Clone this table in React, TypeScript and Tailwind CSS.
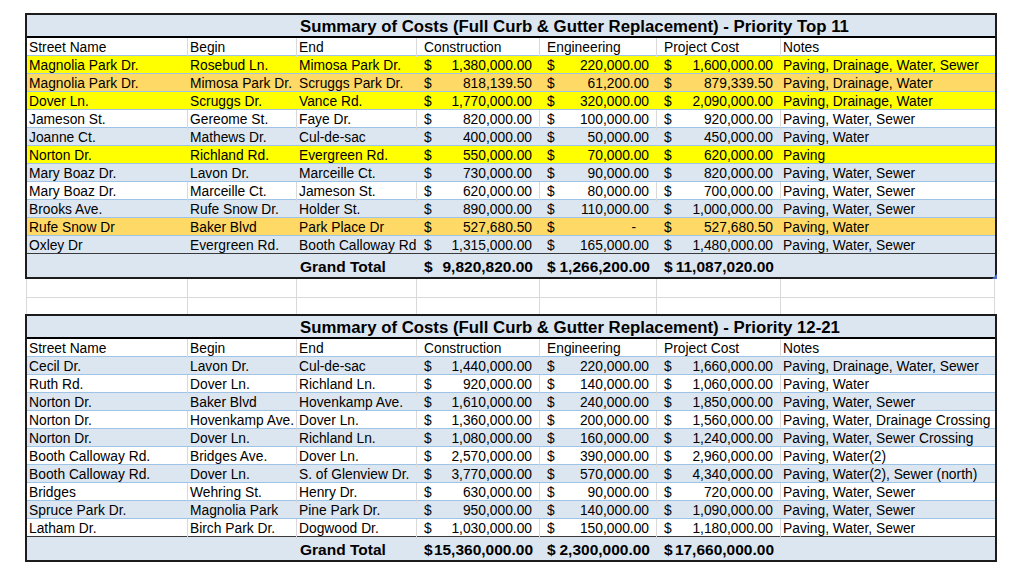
type Fill = "yellow" | "orange" | "blue" | "white";

interface CostRow {
  street: string;
  begin: string;
  end: string;
  construction: string;
  engineering: string;
  project: string;
  notes: string;
  fill: Fill;
}

interface Summary {
  title: string;
  rows: CostRow[];
  totals: [string, string, string];
}

const COLS = "grid grid-cols-[161px_109px_120px_123px_117px_124px_214px]";

const FILLS: Record<Fill, string> = {
  yellow: "bg-[#ffff00]",
  orange: "bg-[#ffd966]",
  blue: "bg-[#dce6f1]",
  white: "bg-white",
};

const top11: Summary = {
  title: "Summary of Costs (Full Curb & Gutter Replacement) - Priority Top 11",
  totals: ["9,820,820.00", "1,266,200.00", "11,087,020.00"],
  rows: [
    { street: "Magnolia Park Dr.", begin: "Rosebud Ln.", end: "Mimosa Park Dr.", construction: "1,380,000.00", engineering: "220,000.00", project: "1,600,000.00", notes: "Paving, Drainage, Water, Sewer", fill: "yellow" },
    { street: "Magnolia Park Dr.", begin: "Mimosa Park Dr.", end: "Scruggs Park Dr.", construction: "818,139.50", engineering: "61,200.00", project: "879,339.50", notes: "Paving, Drainage, Water", fill: "orange" },
    { street: "Dover Ln.", begin: "Scruggs Dr.", end: "Vance Rd.", construction: "1,770,000.00", engineering: "320,000.00", project: "2,090,000.00", notes: "Paving, Drainage, Water", fill: "yellow" },
    { street: "Jameson St.", begin: "Gereome St.", end: "Faye Dr.", construction: "820,000.00", engineering: "100,000.00", project: "920,000.00", notes: "Paving, Water, Sewer", fill: "white" },
    { street: "Joanne Ct.", begin: "Mathews Dr.", end: "Cul-de-sac", construction: "400,000.00", engineering: "50,000.00", project: "450,000.00", notes: "Paving, Water", fill: "blue" },
    { street: "Norton Dr.", begin: "Richland Rd.", end: "Evergreen Rd.", construction: "550,000.00", engineering: "70,000.00", project: "620,000.00", notes: "Paving", fill: "yellow" },
    { street: "Mary Boaz Dr.", begin: "Lavon Dr.", end: "Marceille Ct.", construction: "730,000.00", engineering: "90,000.00", project: "820,000.00", notes: "Paving, Water, Sewer", fill: "blue" },
    { street: "Mary Boaz Dr.", begin: "Marceille Ct.", end: "Jameson St.", construction: "620,000.00", engineering: "80,000.00", project: "700,000.00", notes: "Paving, Water, Sewer", fill: "white" },
    { street: "Brooks Ave.", begin: "Rufe Snow Dr.", end: "Holder St.", construction: "890,000.00", engineering: "110,000.00", project: "1,000,000.00", notes: "Paving, Water, Sewer", fill: "blue" },
    { street: "Rufe Snow Dr", begin: "Baker Blvd", end: "Park Place Dr", construction: "527,680.50", engineering: "-", project: "527,680.50", notes: "Paving, Water", fill: "orange" },
    { street: "Oxley Dr", begin: "Evergreen Rd.", end: "Booth Calloway Rd", construction: "1,315,000.00", engineering: "165,000.00", project: "1,480,000.00", notes: "Paving, Water, Sewer", fill: "blue" },
  ],
};

const next10: Summary = {
  title: "Summary of Costs (Full Curb & Gutter Replacement) - Priority 12-21",
  totals: ["15,360,000.00", "2,300,000.00", "17,660,000.00"],
  rows: [
    { street: "Cecil Dr.", begin: "Lavon Dr.", end: "Cul-de-sac", construction: "1,440,000.00", engineering: "220,000.00", project: "1,660,000.00", notes: "Paving, Drainage, Water, Sewer", fill: "blue" },
    { street: "Ruth Rd.", begin: "Dover Ln.", end: "Richland Ln.", construction: "920,000.00", engineering: "140,000.00", project: "1,060,000.00", notes: "Paving, Water", fill: "white" },
    { street: "Norton Dr.", begin: "Baker Blvd", end: "Hovenkamp Ave.", construction: "1,610,000.00", engineering: "240,000.00", project: "1,850,000.00", notes: "Paving, Water, Sewer", fill: "blue" },
    { street: "Norton Dr.", begin: "Hovenkamp Ave.", end: "Dover Ln.", construction: "1,360,000.00", engineering: "200,000.00", project: "1,560,000.00", notes: "Paving, Water, Drainage Crossing", fill: "white" },
    { street: "Norton Dr.", begin: "Dover Ln.", end: "Richland Ln.", construction: "1,080,000.00", engineering: "160,000.00", project: "1,240,000.00", notes: "Paving, Water, Sewer Crossing", fill: "blue" },
    { street: "Booth Calloway Rd.", begin: "Bridges Ave.", end: "Dover Ln.", construction: "2,570,000.00", engineering: "390,000.00", project: "2,960,000.00", notes: "Paving, Water(2)", fill: "white" },
    { street: "Booth Calloway Rd.", begin: "Dover Ln.", end: "S. of Glenview Dr.", construction: "3,770,000.00", engineering: "570,000.00", project: "4,340,000.00", notes: "Paving, Water(2), Sewer (north)", fill: "blue" },
    { street: "Bridges", begin: "Wehring St.", end: "Henry Dr.", construction: "630,000.00", engineering: "90,000.00", project: "720,000.00", notes: "Paving, Water, Sewer", fill: "white" },
    { street: "Spruce Park Dr.", begin: "Magnolia Park", end: "Pine Park Dr.", construction: "950,000.00", engineering: "140,000.00", project: "1,090,000.00", notes: "Paving, Water, Sewer", fill: "blue" },
    { street: "Latham Dr.", begin: "Birch Park Dr.", end: "Dogwood Dr.", construction: "1,030,000.00", engineering: "150,000.00", project: "1,180,000.00", notes: "Paving, Water, Sewer", fill: "white" },
  ],
};

function Money({ value, line }: { value: string; line: string }) {
  return (
    <div className={`flex justify-between border-r px-[7px] ${line}`}>
      <span>$</span>
      {value === "-" ? <span className="mr-[13px]">-</span> : <span>{value}</span>}
    </div>
  );
}

function Text({ value, line, last }: { value: string; line: string; last?: boolean }) {
  return (
    <div className={`whitespace-nowrap pl-[2px] ${last ? "" : `border-r ${line}`}`}>
      {value}
    </div>
  );
}

function SummaryTable({ data, handle }: { data: Summary; handle?: boolean }) {
  return (
    <div className="relative ml-[25px] w-[972px] border-2 border-[#1c1c1c]">
      <div className={`${COLS} h-[23px] border-b-2 border-black bg-[#dce6f1]`}>
        <div className="col-span-5 col-start-3 whitespace-nowrap pl-[3px] text-[16.8px] font-bold leading-[23px]">
          {data.title}
        </div>
      </div>

      <div className={`${COLS} h-[18px] border-b border-[#9dc3e6] bg-white leading-[19px]`}>
        <Text value="Street Name" line="border-[#d9d9d9]" />
        <Text value="Begin" line="border-[#d9d9d9]" />
        <Text value="End" line="border-[#d9d9d9]" />
        <div className="border-r border-[#d9d9d9] pl-[7px]">Construction</div>
        <div className="border-r border-[#d9d9d9] pl-[7px]">Engineering</div>
        <div className="border-r border-[#d9d9d9] pl-[7px]">Project Cost</div>
        <Text value="Notes" line="" last />
      </div>

      {data.rows.map((row, i) => {
        const line = row.fill === "white" ? "border-[#d9d9d9]" : "border-transparent";
        const bottom = i === data.rows.length - 1 ? "border-[#3a3a3a]" : "border-[#9dc3e6]";
        return (
          <div key={i} className={`${COLS} h-[18px] border-b leading-[20px] ${bottom} ${FILLS[row.fill]}`}>
            <Text value={row.street} line={line} />
            <Text value={row.begin} line={line} />
            <Text value={row.end} line={line} />
            <Money value={row.construction} line={line} />
            <Money value={row.engineering} line={line} />
            <Money value={row.project} line={line} />
            <Text value={row.notes} line={line} last />
          </div>
        );
      })}

      <div className={`${COLS} h-[23px] bg-[#dce6f1] text-[15.5px] font-bold leading-[26px]`}>
        <div className="col-start-3 pl-[3px]">Grand Total</div>
        {data.totals.map((t) => (
          <div key={t} className="flex justify-between whitespace-nowrap px-[7px]">
            <span>$</span>
            <span>{t}</span>
          </div>
        ))}
      </div>

      {handle && (
        <div className="absolute -right-[2px] -bottom-[2px] h-0 w-0 border-b-[5px] border-l-[5px] border-b-[#4a6fc6] border-l-transparent" />
      )}
    </div>
  );
}

function BlankRow({ height }: { height: string }) {
  return (
    <div className={`${COLS} ml-[26px] w-[969px] border-l border-[#d9d9d9] ${height}`}>
      {Array.from({ length: 7 }).map((_, i) => (
        <div key={i} className="border-r border-[#d9d9d9]" />
      ))}
    </div>
  );
}

export default function App() {
  return (
    <div className="h-[576px] w-[1024px] overflow-hidden bg-white pt-[13px] font-['Liberation_Sans',Arial,sans-serif] text-[13.8px] text-black">
      <SummaryTable data={top11} handle />
      <BlankRow height="h-[19px] border-b" />
      <BlankRow height="h-[16px]" />
      <SummaryTable data={next10} />
    </div>
  );
}
